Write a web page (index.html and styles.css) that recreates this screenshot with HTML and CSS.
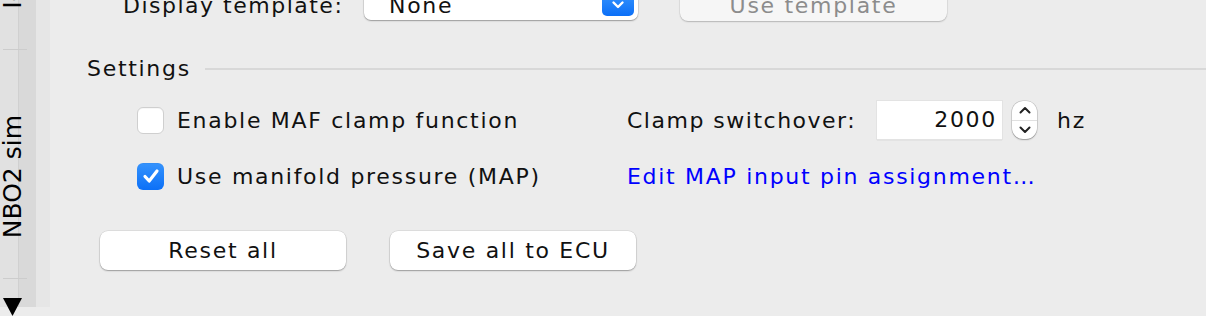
FILE: index.html
```html
<!DOCTYPE html>
<html lang="en">
<head>
<meta charset="utf-8">
<title>NBO2 sim settings</title>
<link rel="stylesheet" href="styles.css">
</head>
<body>
<div class="window">
  <nav class="sidebar">
    <div class="tab tab-top"><span class="tab-label">Idle sim</span></div>
    <div class="tab-sep"></div>
    <div class="tab tab-main"><span class="tab-label">NBO2 sim</span></div>
    <div class="tab-sep"></div>
    <div class="tab-more">
      <svg width="20" height="18" viewBox="0 0 20 18"><polygon points="0,0 19,0 9.5,18" fill="#000"/></svg>
    </div>
  </nav>
  <main class="panel">
    <div class="template-row">
      <span class="template-label">Display template:</span>
      <div class="select">
        <span class="select-value">None</span>
        <span class="select-btn">
          <svg width="14" height="10" viewBox="0 0 14 10"><path d="M2.5 2.5 L7 7 L11.5 2.5" fill="none" stroke="#fff" stroke-width="2.4" stroke-linecap="round" stroke-linejoin="round"/></svg>
        </span>
      </div>
      <button class="btn btn-disabled" disabled>Use template</button>
    </div>

    <section class="settings">
      <div class="group-title"><span>Settings</span><span class="rule"></span></div>

      <div class="options">
        <label class="check"><span class="box"></span><span>Enable MAF clamp function</span></label>
        <div class="field-row">
          <span class="field-label">Clamp switchover:</span>
          <span class="num">2000</span>
          <span class="spin">
            <span class="spin-half">
              <svg width="12" height="8" viewBox="0 0 12 8"><path d="M1.5 6.5 L6 2 L10.5 6.5" fill="none" stroke="#222" stroke-width="2" stroke-linecap="round" stroke-linejoin="round"/></svg>
            </span>
            <span class="spin-half spin-bottom">
              <svg width="12" height="8" viewBox="0 0 12 8"><path d="M1.5 1.5 L6 6 L10.5 1.5" fill="none" stroke="#222" stroke-width="2" stroke-linecap="round" stroke-linejoin="round"/></svg>
            </span>
          </span>
          <span class="unit">hz</span>
        </div>
        <label class="check"><span class="box box-on">
          <svg width="20" height="20" viewBox="0 0 20 20"><path d="M4 10.5 L8.2 15 L16 5" fill="none" stroke="#fff" stroke-width="3.2" stroke-linecap="round" stroke-linejoin="round"/></svg>
        </span><span>Use manifold pressure (MAP)</span></label>
        <a class="link" href="#">Edit MAP input pin assignment…</a>
      </div>

      <div class="actions">
        <button class="btn">Reset all</button>
        <button class="btn">Save all to ECU</button>
      </div>
    </section>
  </main>
</div>
</body>
</html>
```

FILE: styles.css
```css
html, body {
  margin: 0;
  padding: 0;
}

body {
  width: 1206px;
  height: 316px;
  overflow: hidden;
  background: #ececec;
  font-family: "DejaVu Sans", "Noto Sans", sans-serif;
  font-size: 22px;
  letter-spacing: 1.7px;
  color: #111;
}

.window {
  display: flex;
  height: 316px;
}

/* ---------- left tab strip ---------- */
.sidebar {
  width: 50px;
  flex: none;
  display: flex;
  flex-direction: column;
  overflow: hidden;
  background-color: #ececec;
  background-image: linear-gradient(to right,
    #e1e1e1 0 18px,
    #d0d0d0 18px 19px,
    #d9d9d9 19px 36px,
    #e6e6e6 36px 50px);
  background-size: 100% 307px;
  background-repeat: no-repeat;
}

.tab {
  display: flex;
  flex-direction: column;
  box-sizing: border-box;
}

.tab-label {
  writing-mode: vertical-rl;
  transform: rotate(180deg);
  font-size: 25px;
  line-height: 29px;
  letter-spacing: 0;
  color: #000;
  white-space: nowrap;
  margin-left: -2px;
  align-self: flex-start;
}

.tab-top {
  height: 49px;
  justify-content: flex-end;
  padding-bottom: 40px;
}

.tab-main {
  height: 228px;
  justify-content: center;
  padding-top: 25px;
}

.tab-sep {
  height: 1px;
  width: 24px;
  margin-left: 3px;
  background: #cccccc;
}

.tab-more {
  padding-top: 19px;
  padding-left: 3px;
}

.tab-more svg {
  display: block;
}

/* ---------- main panel ---------- */
.panel {
  flex: 1;
  display: flex;
  flex-direction: column;
  min-width: 0;
}

.template-row {
  display: flex;
  align-items: center;
  height: 32px;
  margin-top: -11px;
  padding-left: 73px;
}

.template-label {
  width: 241px;
  flex: none;
  white-space: nowrap;
  letter-spacing: 1.5px;
}

.select {
  width: 274px;
  height: 30px;
  box-sizing: border-box;
  flex: none;
  display: flex;
  align-items: center;
  padding: 0 4px 0 25px;
  background: #fff;
  border-radius: 7px;
  box-shadow: 0 0 0 0.5px rgba(0, 0, 0, 0.12), 0 1px 1.5px rgba(0, 0, 0, 0.3);
}

.select-value {
  flex: 1;
}

.select-btn {
  width: 32px;
  height: 22px;
  border-radius: 5px;
  background: linear-gradient(#3492fd, #0b6ff7);
  display: flex;
  align-items: center;
  justify-content: center;
}

.select-btn svg {
  display: block;
}

button {
  font: inherit;
  letter-spacing: inherit;
  color: inherit;
  border: 0;
  padding: 0;
  margin: 0;
}

.btn {
  width: 246px;
  height: 39px;
  flex: none;
  background: #fff;
  border-radius: 8px;
  color: #111;
  box-shadow: 0 0 0 0.5px rgba(0, 0, 0, 0.12), 0 1px 1.5px rgba(0, 0, 0, 0.3);
}

.btn-disabled {
  width: 267px;
  height: 32px;
  margin-left: 42px;
  background: #f6f6f6;
  color: #8c8c8c;
  box-shadow: 0 0 0 0.5px rgba(0, 0, 0, 0.08), 0 1px 1.5px rgba(0, 0, 0, 0.2);
}

/* ---------- settings group ---------- */
.settings {
  margin-top: 35px;
  padding-left: 37px;
}

.group-title {
  display: flex;
  align-items: center;
  line-height: 26px;
}

.rule {
  flex: 1;
  height: 2px;
  margin-left: 14px;
  background: #d8d8d8;
}

.options {
  display: grid;
  grid-template-columns: 490px auto;
  grid-template-rows: 38px 28px;
  row-gap: 23px;
  align-items: center;
  margin-top: 19px;
  padding-left: 50px;
}

.check {
  display: flex;
  align-items: center;
  gap: 13px;
  white-space: nowrap;
}

.box {
  width: 27px;
  height: 27px;
  box-sizing: border-box;
  border-radius: 6px;
  background: #fff;
  border: 1px solid #cfcfcf;
  box-shadow: inset 0 1px 0 rgba(0, 0, 0, 0.03);
  display: flex;
  align-items: center;
  justify-content: center;
}

.box-on {
  border: 0;
  background: linear-gradient(#3593fd, #0c70f7);
}

.box-on svg {
  display: block;
}

.field-row {
  display: flex;
  align-items: center;
  white-space: nowrap;
}

.field-label {
  width: 230px;
  flex: none;
  letter-spacing: 1.5px;
}

.num {
  width: 125px;
  height: 38px;
  box-sizing: border-box;
  margin-left: 20px;
  padding-right: 5px;
  text-align: right;
  line-height: 38px;
  background: #fff;
  box-shadow: 0 0 0 1px #e3e3e3, 0 1px 1px rgba(0, 0, 0, 0.22);
}

.spin {
  width: 25px;
  height: 38px;
  box-sizing: border-box;
  margin-left: 10px;
  border-radius: 11px;
  background: #fff;
  box-shadow: 0 0 0 0.5px rgba(0, 0, 0, 0.18), 0 1px 1.5px rgba(0, 0, 0, 0.28);
  display: flex;
  flex-direction: column;
}

.spin-half {
  flex: 1;
  display: flex;
  align-items: center;
  justify-content: center;
}

.spin-bottom {
  border-top: 1px solid #e0e0e0;
}

.spin-half svg {
  display: block;
}

.unit {
  margin-left: 20px;
}

.link {
  color: #0000ff;
  text-decoration: none;
  white-space: nowrap;
}

.actions {
  display: flex;
  gap: 44px;
  margin-top: 41px;
  padding-left: 13px;
}
```
